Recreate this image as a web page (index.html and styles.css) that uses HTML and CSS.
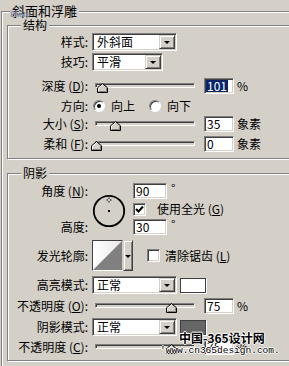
FILE: index.html
```html
<!DOCTYPE html>
<html lang="zh-CN">
<head>
    <meta charset="UTF-8">
    <meta name="viewport" content="width=device-width, initial-scale=1.0">
    <title>斜面和浮雕</title>
    <link rel="stylesheet" href="styles.css">
</head>
<body>
    <svg class="defs" width="0" height="0">
        <symbol id="knob" viewBox="0 0 11 10">
            <path d="M.5 9.5V4.8L5.5.6l5 4.2v4.7z" fill="#d4d0c8" stroke="#000"/>
            <path d="M1.5 8.5V5.2L5.5 1.9" fill="none" stroke="#fff"/>
            <path d="M9.5 5.2v3.3h-8" fill="none" stroke="#808080"/>
        </symbol>
    </svg>

    <div class="dialog">
        <span class="stamp">Photo</span>

        <fieldset class="outer">
            <legend>斜面和浮雕</legend>

            <fieldset class="group structure">
                <legend>结构</legend>
                <div class="row">
                    <span class="label">样式:</span>
                    <div class="combo combo-wide"><span class="combo-text">外斜面</span><span class="combo-btn"></span></div>
                </div>
                <div class="row row-tech">
                    <span class="label">技巧:</span>
                    <div class="combo combo-narrow"><span class="combo-text">平滑</span><span class="combo-btn"></span></div>
                </div>
                <div class="row row-depth">
                    <span class="label">深度 (<u>D</u>):</span>
                    <div class="slider"><span class="track"></span><svg class="thumb" style="left: 2px"><use href="#knob"/></svg></div>
                    <span class="field"><span class="selected">101</span></span>
                    <span class="unit">%</span>
                </div>
                <div class="row row-dir">
                    <span class="label">方向:</span>
                    <span class="radio checked"></span><span class="opt">向上</span>
                    <span class="radio"></span><span class="opt">向下</span>
                </div>
                <div class="row row-size">
                    <span class="label">大小 (<u>S</u>):</span>
                    <div class="slider"><span class="track"></span><svg class="thumb" style="left: 15px"><use href="#knob"/></svg></div>
                    <span class="field">35</span>
                    <span class="unit">象素</span>
                </div>
                <div class="row row-soft">
                    <span class="label">柔和 (<u>F</u>):</span>
                    <div class="slider"><span class="track"></span><svg class="thumb" style="left: -4px"><use href="#knob"/></svg></div>
                    <span class="field">0</span>
                    <span class="unit">象素</span>
                </div>
            </fieldset>

            <fieldset class="group shadow">
                <legend>阴影</legend>
                <div class="angle">
                    <span class="label angle-label">角度 (<u>N</u>):</span>
                    <svg class="dial" width="34" height="34" viewBox="0 0 34 34">
                        <circle cx="17" cy="17" r="15.2" fill="none" stroke="#000" stroke-width="1.8"/>
                        <rect x="16" y="16" width="2" height="2" fill="#000"/>
                        <path d="M17 3.5v1.5M17 7v1.5M14.5 6h1.5M18 6h1.5" stroke="#000" stroke-width="1"/>
                    </svg>
                    <div class="angle-value"><span class="field field-angle">90</span><span class="deg">°</span></div>
                    <label class="check global">
                        <span class="box"><svg width="9" height="9" viewBox="0 0 9 9"><path d="M1 4l2.5 2.5L8 1.5" fill="none" stroke="#000" stroke-width="2"/></svg></span>
                        使用全光 (<u>G</u>)
                    </label>
                    <span class="label height-label">高度:</span>
                    <div class="angle-value height-value"><span class="field field-angle">30</span><span class="deg">°</span></div>
                </div>

                <div class="row row-contour">
                    <span class="label">发光轮廓:</span>
                    <div class="contour">
                        <svg class="curve" width="29" height="29" viewBox="0 0 29 29">
                            <defs>
                                <linearGradient id="glow" x1="0" y1="0" x2="1" y2="0">
                                    <stop offset="0" stop-color="#fff"/>
                                    <stop offset="1" stop-color="#e8e8e8"/>
                                </linearGradient>
                            </defs>
                            <rect width="29" height="29" fill="url(#glow)"/>
                            <path d="M0 29L29 0V29z" fill="#808080"/>
                        </svg>
                        <span class="contour-btn"></span>
                    </div>
                    <label class="check smooth"><span class="box"></span>清除锯齿 (<u>L</u>)</label>
                </div>

                <div class="row row-mode">
                    <span class="label">高亮模式:</span>
                    <div class="combo combo-wide"><span class="combo-text">正常</span><span class="combo-btn"></span></div>
                    <span class="swatch light"></span>
                </div>
                <div class="row row-opacity">
                    <span class="label">不透明度 (<u>O</u>):</span>
                    <div class="slider"><span class="track"></span><svg class="thumb" style="left: 71px"><use href="#knob"/></svg></div>
                    <span class="field">75</span>
                    <span class="unit">%</span>
                </div>
                <div class="row row-mode">
                    <span class="label">阴影模式:</span>
                    <div class="combo combo-wide"><span class="combo-text">正常</span><span class="combo-btn"></span></div>
                    <span class="swatch dark"></span>
                </div>
                <div class="row row-opacity-last">
                    <span class="label">不透明度 (<u>C</u>):</span>
                    <div class="slider"><span class="track"></span><svg class="thumb" style="left: 71px"><use href="#knob"/></svg></div>
                    <span class="field">75</span>
                    <span class="unit">%</span>
                </div>
            </fieldset>
        </fieldset>

        <div class="watermark">
            <span class="wm-title">中国-365设计网</span>
            <span class="wm-url">'www.cn365design.com.</span>
        </div>
    </div>
</body>
</html>
```

FILE: styles.css
```css
body {
    margin: 0;
    background-color: #d4d0c8;
    font-family: "Noto Sans CJK SC", sans-serif;
    font-size: 12px;
    color: #000;
    overflow: hidden;
}
.defs {
    position: absolute;
}
.dialog {
    position: relative;
    width: 289px;
    height: 366px;
    overflow: hidden;
}
fieldset {
    margin: 0;
    padding: 0;
    min-width: 0;
    border: 1px solid #808080;
    box-shadow: inset 1px 1px #fff, 1px 1px #fff;
}
legend {
    padding: 0 2px;
    line-height: 12px;
    background-color: #d4d0c8;
}
.outer {
    width: 300px;
    height: 420px;
    margin: 3px 0 0 1px;
}
.outer > legend {
    font-size: 13px;
    line-height: 16px;
    margin-left: 8px;
}
.group {
    margin-left: 5px;
}
.group > legend {
    margin-left: 13px;
}
.structure {
    padding: 2px 0 5px;
}
.shadow {
    margin-top: 8px;
    padding: 4px 0 4px;
}

.row {
    display: flex;
    align-items: center;
    height: 18px;
    margin-top: 2px;
}
.structure .row:first-of-type {
    margin-top: 0;
}
.row-depth {
    margin-top: 6px;
}
.row-size {
    margin-top: 0;
}
.label {
    width: 80px;
    margin-right: 4px;
    text-align: right;
    white-space: nowrap;
    line-height: 16px;
}

/* combo boxes */
.combo {
    display: flex;
    box-sizing: border-box;
    height: 18px;
    padding: 1px;
    background-color: #fff;
    border: 1px solid;
    border-color: #808080 #fff #fff #808080;
    box-shadow: inset 1px 1px #404040, inset -1px -1px #d4d0c8;
}
.combo-wide {
    width: 85px;
}
.combo-narrow {
    width: 71px;
}
.combo-text {
    flex: 1;
    padding-left: 3px;
    line-height: 14px;
}
.combo-btn,
.contour-btn {
    position: relative;
    box-sizing: border-box;
    width: 16px;
    background-color: #d4d0c8;
    border: 1px solid;
    border-color: #d4d0c8 #404040 #404040 #d4d0c8;
    box-shadow: inset 1px 1px #fff, inset -1px -1px #808080;
}
.combo-btn::after,
.contour-btn::after {
    content: "";
    position: absolute;
    left: 50%;
    top: 50%;
    margin: -1px 0 0 -3px;
    border-left: 3px solid transparent;
    border-right: 3px solid transparent;
    border-top: 3px solid #000;
}

/* sliders */
.slider {
    position: relative;
    width: 100px;
    height: 18px;
    margin: 0 9px 0 3px;
}
.track {
    display: block;
    box-sizing: border-box;
    height: 5px;
    margin-top: 6px;
    background-color: #d4d0c8;
    border: 1px solid;
    border-color: #808080 #fff #fff #808080;
    box-shadow: inset 1px 1px #404040, inset -1px -1px #d4d0c8;
}
.thumb {
    position: absolute;
    top: 6px;
    width: 11px;
    height: 10px;
}

/* text fields */
.field {
    box-sizing: border-box;
    width: 30px;
    height: 16px;
    padding: 0 2px;
    line-height: 14px;
    background-color: #fff;
    border: 1px solid;
    border-color: #808080 #fff #fff #808080;
    box-shadow: inset 1px 1px #404040, inset -1px -1px #d4d0c8;
}
.selected {
    display: inline-block;
    padding: 0 1px;
    margin-left: -1px;
    line-height: 12px;
    color: #fff;
    background-color: #0a246a;
}
.unit {
    margin-left: 3px;
    line-height: 16px;
}

/* radios and checks */
.radio {
    position: relative;
    box-sizing: border-box;
    width: 12px;
    height: 12px;
    margin-left: 1px;
    border-radius: 50%;
    background-color: #fff;
    border: 1px solid;
    border-color: #808080 #fff #fff #808080;
    box-shadow: inset 1px 1px #404040;
}
.radio.checked::after {
    content: "";
    position: absolute;
    left: 3px;
    top: 3px;
    width: 4px;
    height: 4px;
    border-radius: 50%;
    background-color: #000;
}
.opt {
    margin: 0 13px 0 6px;
    line-height: 16px;
}
.check {
    display: flex;
    align-items: center;
    line-height: 16px;
}
.box {
    display: flex;
    align-items: center;
    justify-content: center;
    box-sizing: border-box;
    width: 13px;
    height: 13px;
    background-color: #fff;
    border: 1px solid;
    border-color: #808080 #fff #fff #808080;
    box-shadow: inset 1px 1px #404040, inset -1px -1px #d4d0c8;
}
.global .box {
    margin-right: 11px;
}
.smooth {
    margin-left: 14px;
}
.smooth .box {
    margin-right: 5px;
}

/* angle block */
.angle {
    display: grid;
    grid-template-columns: 84px 41px auto;
    grid-template-rows: 16px 16px 16px;
    row-gap: 2px;
    align-items: center;
}
.angle-label {
    grid-column: 1;
    grid-row: 1;
}
.dial {
    grid-column: 2;
    grid-row: 1 / 4;
    margin-top: 3px;
}
.angle-value {
    display: flex;
    align-items: flex-start;
    grid-column: 3;
    grid-row: 1;
}
.global {
    grid-column: 3;
    grid-row: 2;
}
.height-label {
    grid-column: 1;
    grid-row: 3;
}
.height-value {
    grid-row: 3;
}
.field-angle {
    width: 34px;
}
.deg {
    margin-left: 4px;
    line-height: 10px;
}

/* contour */
.row-contour {
    height: 31px;
    margin-top: 5px;
}
.contour {
    display: flex;
    height: 31px;
}
.curve {
    display: block;
    border: 1px solid;
    border-color: #404040 #d4d0c8 #fff #404040;
}
.contour-btn {
    width: 10px;
}
.row-mode {
    margin-top: 5px;
}
.row-opacity {
    margin-top: 3px;
}
.row-mode + .row-opacity-last {
    margin-top: 2px;
}
.row-opacity + .row-mode {
    margin-top: 3px;
}
.swatch {
    box-sizing: border-box;
    width: 26px;
    height: 15px;
    margin-left: 3px;
    border: 1px solid #404040;
    box-shadow: 1px 1px #fff;
}
.light {
    background-color: #fff;
}
.dark {
    background-color: #666;
}

/* overlays */
.stamp {
    position: absolute;
    left: 10px;
    top: 10px;
    font-family: "Liberation Serif", serif;
    font-size: 8px;
    font-weight: bold;
    color: #8c96b4;
    z-index: 1;
}
.watermark {
    position: absolute;
    left: 160px;
    top: 330px;
    display: flex;
    flex-direction: column;
    text-shadow: 1px 0 #fff, -1px 0 #fff, 0 1px #fff, 0 -1px #fff;
}
.wm-title {
    margin-left: 19px;
    font-weight: bold;
    line-height: 15px;
}
.wm-url {
    font-family: "Liberation Mono", monospace;
    font-size: 9.5px;
    line-height: 11px;
}
```
